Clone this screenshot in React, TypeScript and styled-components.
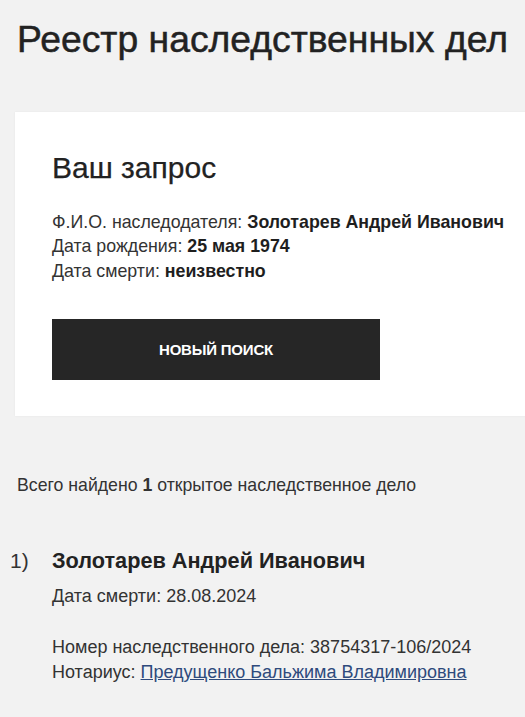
import React from 'react';
import styled, { createGlobalStyle } from 'styled-components';

const Global = createGlobalStyle`
    html, body {
        margin: 0;
        padding: 0;
        background: #f2f2f2;
    }
    body {
        font-family: "Liberation Sans", Arial, sans-serif;
        color: #222;
        overflow: hidden;
    }
`;

const Page = styled.div`
    padding: 15px 0 0 0;
`;

const Title = styled.h1`
    margin: 0 0 0 17px;
    font-size: 37.3px;
    font-weight: 400;
    line-height: 48px;
    color: #222;
    white-space: nowrap;
    -webkit-text-stroke: 0.5px #222;
`;

const Card = styled.section`
    background: #fff;
    margin: 49px -20px 0 15px;
    padding: 38px 0 36px 37px;
    box-shadow: 0 0 2px rgba(0, 0, 0, 0.06);
`;

const CardTitle = styled.h2`
    margin: 0 0 23.5px 0;
    font-size: 30px;
    font-weight: 400;
    line-height: 36px;
    color: #222;
    -webkit-text-stroke: 0.25px #222;
`;

const InfoLine = styled.div`
    font-size: 17.8px;
    line-height: 24.5px;
    white-space: nowrap;
    color: #333;

    b {
        color: #1e1e1e;
    }
`;

const Button = styled.button`
    margin-top: 36px;
    width: 328px;
    height: 61px;
    border: 0;
    background: #262626;
    color: #fff;
    font-family: inherit;
    font-size: 15px;
    font-weight: 700;
    text-transform: uppercase;
    letter-spacing: -0.2px;
    cursor: pointer;
    display: block;
`;

const Summary = styled.p`
    margin: 57px 0 0 17px;
    font-size: 17.7px;
    line-height: 24px;
    color: #333;
`;

const Result = styled.div`
    display: grid;
    grid-template-columns: 42px 1fr;
    align-items: baseline;
    margin: 49px 0 0 10px;
`;

const Index = styled.span`
    font-size: 21px;
    line-height: 30px;
    color: #333;
`;

const ResultName = styled.div`
    font-size: 21.7px;
    font-weight: 700;
    line-height: 30px;
    color: #222;
`;

const ResultLine = styled.div<{ $gap?: number }>`
    margin-top: ${p => p.$gap ?? 0}px;
    font-size: 18px;
    line-height: 25px;
    color: #333;
    white-space: nowrap;
`;

const Link = styled.a`
    color: #2e4a7c;
    text-decoration: underline;
`;

export default function App() {
    return <Page>
        <Global />
        <Title>Реестр наследственных дел</Title>

        <Card>
            <CardTitle>Ваш запрос</CardTitle>
            <InfoLine>Ф.И.О. наследодателя: <b>Золотарев Андрей Иванович</b></InfoLine>
            <InfoLine>Дата рождения: <b>25 мая 1974</b></InfoLine>
            <InfoLine>Дата смерти: <b>неизвестно</b></InfoLine>
            <Button>Новый поиск</Button>
        </Card>

        <Summary>Всего найдено <b>1</b> открытое наследственное дело</Summary>

        <Result>
            <Index>1)</Index>
            <div>
                <ResultName>Золотарев Андрей Иванович</ResultName>
                <ResultLine $gap={8}>Дата смерти: 28.08.2024</ResultLine>
                <ResultLine $gap={26}>Номер наследственного дела: 38754317-106/2024</ResultLine>
                <ResultLine>Нотариус: <Link href="#">Предущенко Бальжима Владимировна</Link></ResultLine>
            </div>
        </Result>
    </Page>;
}
